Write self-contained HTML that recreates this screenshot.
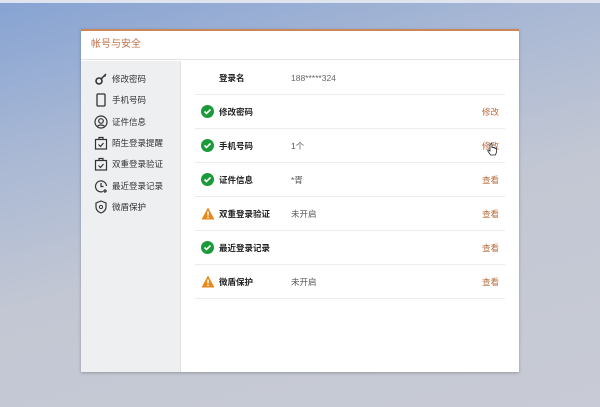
<!DOCTYPE html>
<html><head><meta charset="utf-8"><style>
*{margin:0;padding:0;box-sizing:border-box}
body{width:600px;height:407px;overflow:hidden;position:relative;font-family:"Liberation Sans","Noto Sans CJK SC",sans-serif;
background:linear-gradient(165deg,#86a3d3 0%,#a9b8d4 28%,#c2c7d3 55%,#c8cbd5 100%)}
.dlg{position:absolute;left:81px;top:29px;width:438px;height:343px;background:#fff;border-top:2px solid #c9875a;box-shadow:0 1px 3px rgba(0,0,0,.25)}
.hd{height:29px;border-bottom:1px solid #e2e2e2;color:#c2704a;font-size:10px;line-height:28px;padding-left:10px}
.sb{position:absolute;left:0;top:30px;width:100px;bottom:0;background:#eeeff1;border-right:1px solid #e0e0e0}
.si{position:absolute;left:13px;font-size:8.5px;color:#333;height:14px;line-height:14px}
.si svg{position:absolute;left:0;top:0}
.si span{position:absolute;left:18px;white-space:nowrap}
.row{position:absolute;left:114px;width:310px;height:34px;border-bottom:1px solid #ececec}
.row .ic{position:absolute;left:6px;top:10px}
.row .lb{position:absolute;left:24px;top:0;line-height:34px;font-size:8.5px;font-weight:bold;color:#222}
.row .vl{position:absolute;left:96px;top:0;line-height:34px;font-size:8.5px;color:#555}
.row .ac{position:absolute;left:287px;top:0;line-height:34px;font-size:8.5px;color:#b86a3a}
</style></head><body>
<div style="position:absolute;left:0;top:0;width:600px;height:3px;background:#dfe4ee"></div>
<div class="dlg">
<div class="hd">帐号与安全</div>
<div class="sb">
<div class="si" style="top:11px"><svg width="14" height="14" viewBox="0 0 14 14"><circle cx="5" cy="9" r="3" fill="none" stroke="#333" stroke-width="1.6"/><path d="M7 7L12 2M10 3l1.5 1.5" stroke="#333" stroke-width="1.5" fill="none"/></svg><span>修改密码</span></div>
<div class="si" style="top:32px"><svg width="14" height="14" viewBox="0 0 14 14"><rect x="3" y="1" width="8" height="12" rx="1" fill="none" stroke="#333" stroke-width="1.3"/></svg><span>手机号码</span></div>
<div class="si" style="top:54px"><svg width="14" height="14" viewBox="0 0 14 14"><circle cx="7" cy="7" r="6" fill="none" stroke="#333" stroke-width="1.2"/><circle cx="7" cy="6" r="2.3" fill="none" stroke="#333" stroke-width="1.2"/><path d="M3.5 11.5c1-2 6-2 7 0" fill="none" stroke="#333" stroke-width="1.2"/></svg><span>证件信息</span></div>
<div class="si" style="top:75px"><svg width="14" height="14" viewBox="0 0 14 14"><rect x="1.5" y="3.5" width="11" height="9.5" fill="none" stroke="#333" stroke-width="1.2"/><path d="M5 3.5V1.5h4v2M4.5 8.5l2 2 3-3.5" fill="none" stroke="#333" stroke-width="1.2"/></svg><span>陌生登录提醒</span></div>
<div class="si" style="top:96px"><svg width="14" height="14" viewBox="0 0 14 14"><rect x="1.5" y="3.5" width="11" height="9.5" fill="none" stroke="#333" stroke-width="1.2"/><path d="M5 3.5V1.5h4v2M4.5 8.5l2 2 3-3.5" fill="none" stroke="#333" stroke-width="1.2"/></svg><span>双重登录验证</span></div>
<div class="si" style="top:118px"><svg width="14" height="14" viewBox="0 0 14 14"><path d="M9 12.5A5.5 5.5 0 1 1 12.5 7" fill="none" stroke="#333" stroke-width="1.2"/><path d="M7 4v3.5h2.5M11 10v4M9 12h4" fill="none" stroke="#333" stroke-width="1.2"/></svg><span>最近登录记录</span></div>
<div class="si" style="top:139px"><svg width="14" height="14" viewBox="0 0 14 14"><path d="M7 1l5 2v4c0 3-2.5 5-5 6-2.5-1-5-3-5-6V3z" fill="none" stroke="#333" stroke-width="1.2"/><circle cx="7" cy="7" r="1.6" fill="none" stroke="#333" stroke-width="1"/></svg><span>微盾保护</span></div>
</div>
<div class="row" style="top:30px"><div class="lb">登录名</div><div class="vl" style="color:#666">188*****324</div></div>
<div class="row" style="top:64px"><svg class="ic" width="13" height="13" viewBox="0 0 13 13"><circle cx="6.5" cy="6.5" r="6.5" fill="#1a9a3a"/><path d="M3.5 6.5l2 2 4-4" stroke="#fff" stroke-width="1.6" fill="none"/></svg><div class="lb">修改密码</div><div class="ac">修改</div></div>
<div class="row" style="top:98px"><svg class="ic" width="13" height="13" viewBox="0 0 13 13"><circle cx="6.5" cy="6.5" r="6.5" fill="#1a9a3a"/><path d="M3.5 6.5l2 2 4-4" stroke="#fff" stroke-width="1.6" fill="none"/></svg><div class="lb">手机号码</div><div class="vl">1个</div><div class="ac">修改</div>
<svg style="position:absolute;left:292px;top:14px" width="10" height="13" viewBox="0 0 10 13"><path d="M3 1v7L1.5 7c-1 0-1 1 0 2l2 3h5l1-3V6c0-1-1-1-1.5 0V5c0-1-1-1-1.5 0c0-1-1-1-1.5 0V1c0-.8-1-.8-1 0z" fill="#fff" stroke="#222" stroke-width=".8"/></svg></div>
<div class="row" style="top:132px"><svg class="ic" width="13" height="13" viewBox="0 0 13 13"><circle cx="6.5" cy="6.5" r="6.5" fill="#1a9a3a"/><path d="M3.5 6.5l2 2 4-4" stroke="#fff" stroke-width="1.6" fill="none"/></svg><div class="lb">证件信息</div><div class="vl">*胥</div><div class="ac">查看</div></div>
<div class="row" style="top:166px"><svg class="ic" width="14" height="13" viewBox="0 0 14 13"><path d="M7 0.5L13.5 12.5H0.5z" fill="#e8891c"/><path d="M7 4.5v4M7 9.8v1.2" stroke="#fff" stroke-width="1.5"/></svg><div class="lb">双重登录验证</div><div class="vl">未开启</div><div class="ac">查看</div></div>
<div class="row" style="top:200px"><svg class="ic" width="13" height="13" viewBox="0 0 13 13"><circle cx="6.5" cy="6.5" r="6.5" fill="#1a9a3a"/><path d="M3.5 6.5l2 2 4-4" stroke="#fff" stroke-width="1.6" fill="none"/></svg><div class="lb">最近登录记录</div><div class="ac">查看</div></div>
<div class="row" style="top:234px"><svg class="ic" width="14" height="13" viewBox="0 0 14 13"><path d="M7 0.5L13.5 12.5H0.5z" fill="#e8891c"/><path d="M7 4.5v4M7 9.8v1.2" stroke="#fff" stroke-width="1.5"/></svg><div class="lb">微盾保护</div><div class="vl">未开启</div><div class="ac">查看</div></div>
</div>
</body></html>
